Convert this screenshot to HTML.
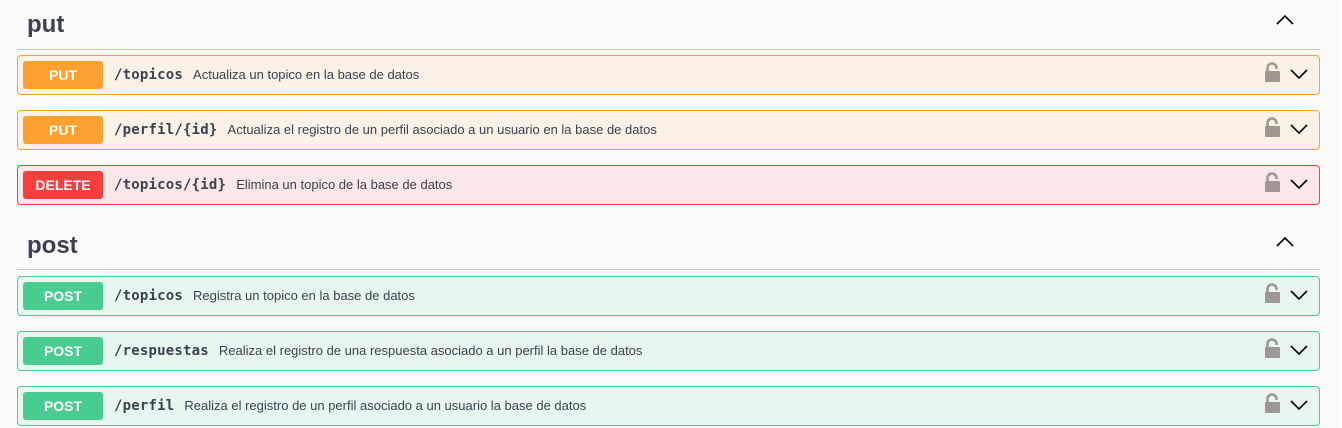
<!DOCTYPE html>
<html><head><meta charset="utf-8"><style>
*{box-sizing:border-box;margin:0;padding:0}
body{width:1342px;height:428px;background:#fafafa;font-family:"Liberation Sans",Arial,sans-serif;position:relative;overflow:hidden;color:#3b4151}
.strip{position:absolute;right:0;top:0;width:2px;height:428px;background:#fff}
h2{position:absolute;left:27px;font-size:24px;font-weight:bold;color:#3b4151}
.line{position:absolute;left:17px;width:1303px;height:1px;background:#c9c9c9}
.up{position:absolute;left:1276px}
.op{position:absolute;left:17px;width:1303px;height:40px;border:1px solid;border-radius:4px}
.put{background:#fbf1e6;border-color:#fca130}
.del{background:#fae7e7;border-color:#f93e3e}
.post{background:#e8f6f0;border-color:#49cc90}
.b{position:absolute;left:5px;top:5px;width:80px;height:28px;border-radius:3px;color:#fff;font-weight:bold;font-size:14px;text-align:center;line-height:28px}
.put .b{background:#fca130}.del .b{background:#f93e3e}.post .b{background:#49cc90}
.p{position:absolute;left:96px;top:0;line-height:38px;font-family:"DejaVu Sans Mono","Liberation Mono",monospace;font-weight:bold;font-size:14px;letter-spacing:0.2px;color:#3b4151;white-space:nowrap}
.p span{font-family:"Liberation Sans",Arial,sans-serif;font-weight:normal;font-size:13px;letter-spacing:0;margin-left:10px}
.lk{position:absolute;left:1246px;top:6px}
.dn{position:absolute;left:1272px;top:12px}
</style></head><body>
<div class="strip"></div>
<h2 style="top:11px">put</h2>
<svg class="up" style="top:14px" width="18" height="12" viewBox="0 0 18 12"><path d="M1 10 L9 2 L17 10" fill="none" stroke="#000" stroke-width="1.6"/></svg>
<div class="line" style="top:49px"></div>

<div class="op put" style="top:55px"><div class="b">PUT</div><div class="p">/topicos<span>Actualiza un topico en la base de datos</span></div>
<svg class="lk" width="16" height="20" viewBox="0 0 16 20"><path d="M3.5 10 V6 a4.5 4.5 0 0 1 9 0 V7" fill="none" stroke="#9e9892" stroke-width="2.6"/><rect x="1" y="9" width="15" height="11" rx="1" fill="#9e9892"/></svg>
<svg class="dn" width="18" height="12" viewBox="0 0 18 12"><path d="M1 2 L9 10 L17 2" fill="none" stroke="#000" stroke-width="1.6"/></svg></div>

<div class="op put" style="top:110px"><div class="b">PUT</div><div class="p">/perfil/{id}<span>Actualiza el registro de un perfil asociado a un usuario en la base de datos</span></div>
<svg class="lk" width="16" height="20" viewBox="0 0 16 20"><path d="M3.5 10 V6 a4.5 4.5 0 0 1 9 0 V7" fill="none" stroke="#9e9892" stroke-width="2.6"/><rect x="1" y="9" width="15" height="11" rx="1" fill="#9e9892"/></svg>
<svg class="dn" width="18" height="12" viewBox="0 0 18 12"><path d="M1 2 L9 10 L17 2" fill="none" stroke="#000" stroke-width="1.6"/></svg></div>

<div class="op del" style="top:165px"><div class="b">DELETE</div><div class="p">/topicos/{id}<span>Elimina un topico de la base de datos</span></div>
<svg class="lk" width="16" height="20" viewBox="0 0 16 20"><path d="M3.5 10 V6 a4.5 4.5 0 0 1 9 0 V7" fill="none" stroke="#9e9892" stroke-width="2.6"/><rect x="1" y="9" width="15" height="11" rx="1" fill="#9e9892"/></svg>
<svg class="dn" width="18" height="12" viewBox="0 0 18 12"><path d="M1 2 L9 10 L17 2" fill="none" stroke="#000" stroke-width="1.6"/></svg></div>

<h2 style="top:232px">post</h2>
<svg class="up" style="top:236px" width="18" height="12" viewBox="0 0 18 12"><path d="M1 10 L9 2 L17 10" fill="none" stroke="#000" stroke-width="1.6"/></svg>
<div class="line" style="top:269px"></div>

<div class="op post" style="top:276px"><div class="b">POST</div><div class="p">/topicos<span>Registra un topico en la base de datos</span></div>
<svg class="lk" width="16" height="20" viewBox="0 0 16 20"><path d="M3.5 10 V6 a4.5 4.5 0 0 1 9 0 V7" fill="none" stroke="#9e9892" stroke-width="2.6"/><rect x="1" y="9" width="15" height="11" rx="1" fill="#9e9892"/></svg>
<svg class="dn" width="18" height="12" viewBox="0 0 18 12"><path d="M1 2 L9 10 L17 2" fill="none" stroke="#000" stroke-width="1.6"/></svg></div>

<div class="op post" style="top:331px"><div class="b">POST</div><div class="p">/respuestas<span>Realiza el registro de una respuesta asociado a un perfil la base de datos</span></div>
<svg class="lk" width="16" height="20" viewBox="0 0 16 20"><path d="M3.5 10 V6 a4.5 4.5 0 0 1 9 0 V7" fill="none" stroke="#9e9892" stroke-width="2.6"/><rect x="1" y="9" width="15" height="11" rx="1" fill="#9e9892"/></svg>
<svg class="dn" width="18" height="12" viewBox="0 0 18 12"><path d="M1 2 L9 10 L17 2" fill="none" stroke="#000" stroke-width="1.6"/></svg></div>

<div class="op post" style="top:386px"><div class="b">POST</div><div class="p">/perfil<span>Realiza el registro de un perfil asociado a un usuario la base de datos</span></div>
<svg class="lk" width="16" height="20" viewBox="0 0 16 20"><path d="M3.5 10 V6 a4.5 4.5 0 0 1 9 0 V7" fill="none" stroke="#9e9892" stroke-width="2.6"/><rect x="1" y="9" width="15" height="11" rx="1" fill="#9e9892"/></svg>
<svg class="dn" width="18" height="12" viewBox="0 0 18 12"><path d="M1 2 L9 10 L17 2" fill="none" stroke="#000" stroke-width="1.6"/></svg></div>
</body></html>
